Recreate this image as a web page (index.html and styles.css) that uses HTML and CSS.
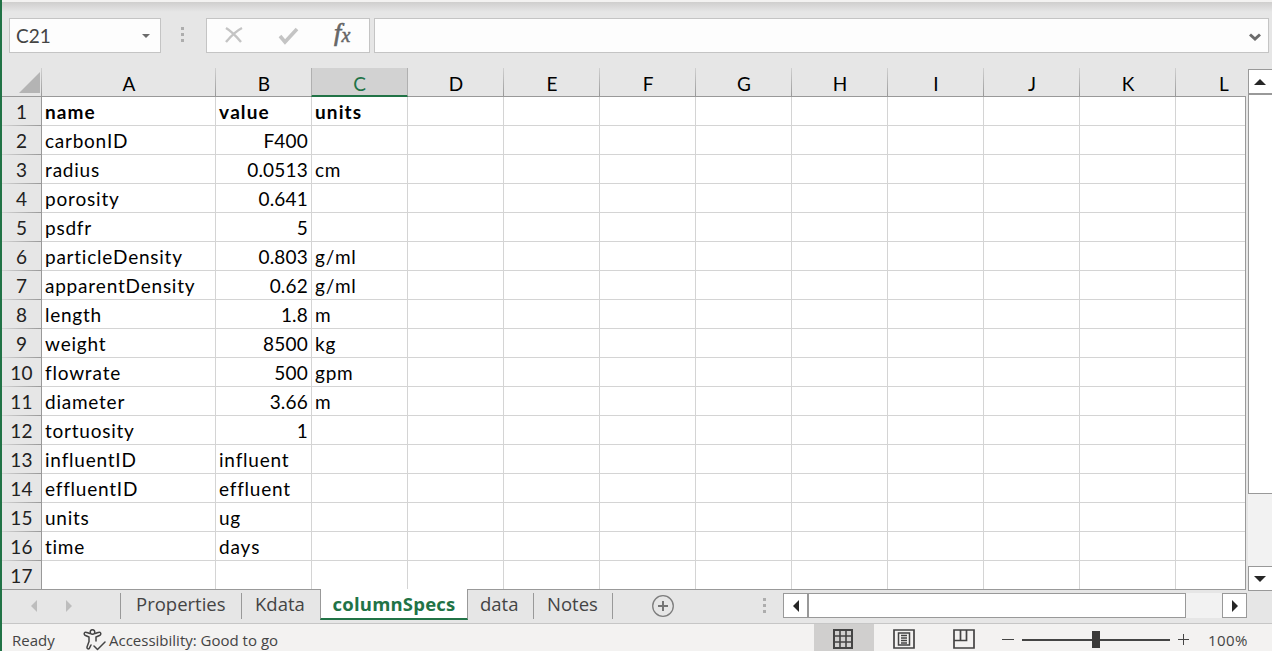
FILE: index.html
```html
<!DOCTYPE html>
<html lang="en">
<head>
<meta charset="utf-8">
<title>Workbook</title>
<link rel="stylesheet" href="styles.css">
</head>
<body>
<div class="window">
  <div class="ribbon-edge"></div>
  <div class="formula-bar">
    <div class="name-box"><span>C21</span>
      <svg width="8" height="4" viewBox="0 0 8 4"><path d="M0 0h8L4 4z" fill="#6b6b6b"/></svg>
    </div>
    <div class="dots"><i></i><i></i><i></i></div>
    <div class="fx-box">
      <svg width="162" height="33" viewBox="0 0 162 33">
        <path d="M19 9c5 3 10 8 15 14M35 9c-6 3-11 8-16 14" fill="none" stroke="#c4c4c4" stroke-width="2.400"/>
        <path d="M73 17l5 6L90 10" fill="none" stroke="#c4c4c4" stroke-width="3.600"/>
        <text x="127" y="22" class="fx-f">f</text><text x="134.500" y="23" class="fx-x">x</text>
      </svg>
    </div>
    <div class="formula-input">
      <svg width="12" height="9" viewBox="0 0 12 9"><path d="M1 1.500l5 4.500 5-4.500" fill="none" stroke="#6b6b6b" stroke-width="3"/></svg>
    </div>
  </div>
  <div class="work">
    <div class="sheet">
      <div class="col-heads">
        <div class="corner"><svg width="21" height="21" viewBox="0 0 21 21"><path d="M21 0v21H0z" fill="#b4b4b4"/></svg></div>
        <div>A</div><div>B</div><div class="selected">C</div><div>D</div><div>E</div><div>F</div><div>G</div><div>H</div><div>I</div><div>J</div><div>K</div><div class="last">L</div>
      </div>
      <div class="rows">
        <div class="row bold"><b>1</b><span>name</span><span>value</span><span>units</span></div>
        <div class="row"><b>2</b><span>carbonID</span><span class="num">F400</span><span></span></div>
        <div class="row"><b>3</b><span>radius</span><span class="num">0.0513</span><span>cm</span></div>
        <div class="row"><b>4</b><span>porosity</span><span class="num">0.641</span><span></span></div>
        <div class="row"><b>5</b><span>psdfr</span><span class="num">5</span><span></span></div>
        <div class="row"><b>6</b><span>particleDensity</span><span class="num">0.803</span><span>g/ml</span></div>
        <div class="row"><b>7</b><span>apparentDensity</span><span class="num">0.62</span><span>g/ml</span></div>
        <div class="row"><b>8</b><span>length</span><span class="num">1.8</span><span>m</span></div>
        <div class="row"><b>9</b><span>weight</span><span class="num">8500</span><span>kg</span></div>
        <div class="row"><b>10</b><span>flowrate</span><span class="num">500</span><span>gpm</span></div>
        <div class="row"><b>11</b><span>diameter</span><span class="num">3.66</span><span>m</span></div>
        <div class="row"><b>12</b><span>tortuosity</span><span class="num">1</span><span></span></div>
        <div class="row"><b>13</b><span>influentID</span><span>influent</span><span></span></div>
        <div class="row"><b>14</b><span>effluentID</span><span>effluent</span><span></span></div>
        <div class="row"><b>15</b><span>units</span><span>ug</span><span></span></div>
        <div class="row"><b>16</b><span>time</span><span>days</span><span></span></div>
        <div class="row"><b>17</b><span></span><span></span><span></span></div>
      </div>
    </div>
    <div class="vscroll">
      <div class="sbtn"><svg width="12" height="6" viewBox="0 0 12 6"><path d="M6 0l6 6H0z" fill="#262626"/></svg></div>
      <div class="vthumb"></div>
      <div class="vtrack"></div>
      <div class="sbtn"><svg width="12" height="6" viewBox="0 0 12 6"><path d="M0 0h12L6 6z" fill="#262626"/></svg></div>
    </div>
  </div>
  <div class="tabbar">
    <div class="tab-nav">
      <svg width="6" height="12" viewBox="0 0 6 12"><path d="M6 0v12L0 6z" fill="#bdbdbd"/></svg>
      <svg width="6" height="12" viewBox="0 0 6 12"><path d="M0 0v12l6-6z" fill="#bdbdbd"/></svg>
    </div>
    <div class="tab t1"><span>Properties</span></div>
    <div class="tab t2"><span>Kdata</span></div>
    <div class="tab active"><span>columnSpecs</span></div>
    <div class="tab t3"><span>data</span></div>
    <div class="tab t4"><span>Notes</span></div>
    <svg class="add" width="22" height="22" viewBox="0 0 22 22"><circle cx="11" cy="11" r="10.300" fill="none" stroke="#7d7d7d" stroke-width="1.300"/><path d="M11 6v10M6 11h10" stroke="#757575" stroke-width="2"/></svg>
    <div class="hdots"><i></i><i></i><i></i></div>
    <div class="hscroll">
      <div class="hbtn"><svg width="6" height="12" viewBox="0 0 6 12"><path d="M6 0v12L0 6z" fill="#262626"/></svg></div>
      <div class="hthumb"></div>
      <div class="htrack"></div>
      <div class="hbtn"><svg width="6" height="12" viewBox="0 0 6 12"><path d="M0 0v12l6-6z" fill="#262626"/></svg></div>
    </div>
  </div>
  <div class="status">
    <span class="ready">Ready</span>
    <svg class="acc" width="23" height="22" viewBox="0 0 23 22" fill="none" stroke="#444" stroke-width="1.500" stroke-linecap="round" stroke-linejoin="round">
      <circle cx="9.500" cy="3" r="2.300"/>
      <path d="M7 4.500C5 4.300 3.500 2.500 2 3.300.6 4.500 1.200 6 2.500 6.500L6 8v4.500L4 18c-.2 1.500 1 2.300 2.200 1.700L8 16M12 4.500c2-.2 3.500-2 5-1.200 1.400 1.200.8 2.700-.5 3.200L13 8v4M11 17l3.500 3.500L22 13"/>
    </svg>
    <span class="acc-text">Accessibility: Good to go</span>
    <div class="view on"><svg width="20" height="20" viewBox="0 0 20 20" fill="none" stroke="#444"><path d="M1 1h18v18H1z" stroke-width="2"/><path d="M7 1v18M13 1v18M1 7h18M1 13h18" stroke-width="1.600"/></svg></div>
    <div class="view"><svg width="22" height="20" viewBox="0 0 22 20" fill="none" stroke="#444"><path d="M1 1h20v18H1z" stroke-width="1.700"/><path d="M5.500 4h11v12h-11z" stroke-width="1.500"/><path d="M8 6.500h6M8 9h6M8 11.500h6M8 14h6" stroke-width="1.300"/></svg></div>
    <div class="view"><svg width="22" height="20" viewBox="0 0 22 20" fill="none" stroke="#444"><path d="M1 1h20v18H1z" stroke-width="1.700"/><path d="M7.500 1v10.500M1 11.500h12.500V1" stroke-width="1.700"/></svg></div>
    <svg class="zoom" width="188" height="17" viewBox="0 0 188 17"><path d="M0 8.500h12M176 8.500h11M181.500 3v11" stroke="#444" stroke-width="1"/><path d="M20 9h148" stroke="#444" stroke-width="2"/><path d="M90 0h8v17h-8z" fill="#3b3a39"/></svg>
    <span class="pct">100%</span>
  </div>
</div>
</body>
</html>
```
FILE: styles.css
```css
* { box-sizing: border-box; }
body { margin: 0; width: 1272px; height: 651px; overflow: hidden; }
.window { height: 651px; border-left: 2px solid #217346; background: #e6e6e6; display: flex; flex-direction: column; font-family: "Open Sans", sans-serif; }
.ribbon-edge { height: 18px; flex: none; background: linear-gradient(#f3f2f1 0 2px, #cfcecd 2px, #e6e6e6 12px); }
.formula-bar { display: flex; height: 50px; flex: none; padding-left: 7px; align-items: flex-start; }
.name-box, .fx-box, .formula-input { height: 35px; border: 1px solid #c4c4c4; background: #fdfdfd; }
.name-box { width: 152px; display: flex; align-items: center; justify-content: space-between; padding: 0 10px 0 6px; font: 19px "Lato", sans-serif; color: #444; }
.dots, .hdots { display: flex; flex-direction: column; gap: 3px; }
.dots i, .hdots i { width: 3px; height: 3px; background: #adadad; }
.dots { margin: 9px 22px 0 20px; }
.fx-box { width: 164px; }
.fx-box svg { display: block; }
.fx-f { font: italic 26px "Liberation Serif", serif; fill: #666; stroke: #666; stroke-width: .7px; }
.fx-x { font: italic 20px "Liberation Serif", serif; fill: #666; stroke: #666; stroke-width: .5px; }
.formula-input { width: 895px; margin-left: 4px; display: flex; justify-content: flex-end; align-items: center; padding: 3px 7px 0 0; }
.work { display: flex; height: 521px; flex: none; }
.sheet { width: 1244px; font: 19px/28px "Lato", sans-serif; color: #000; background: linear-gradient(#999, #999) right 28px / 1px 100% no-repeat #fff; }
.col-heads { display: flex; height: 29px; width: 1244px; background: #e6e6e6; border-bottom: 1px solid #999; text-align: center; line-height: 31px; }
.col-heads div { width: 96px; flex: none; background: linear-gradient(#d0d0d0, #999) right / 1px 100% no-repeat; }
.col-heads .corner { width: 40px; padding: 4px 0 0 15px; line-height: 0; }
.col-heads .corner + div { width: 174px; }
.col-heads .selected { width: 97px; margin-left: -1px; height: 29px; background: #d2d2d2; border: solid #b0b0b0; border-width: 0 1px; border-bottom: 2px solid #217346; color: #217346; }
.col-heads .last { width: 70px; padding-left: 26px; background: none; }
.rows { width: 1243px; background: repeating-linear-gradient(90deg, transparent 0 95px, #d4d4d4 95px 96px) 310px 0 / 933px 100% no-repeat; height: 492px; overflow: hidden; }
.row { height: 29px; display: grid; grid-template-columns: 40px 174px 96px 96px; border-bottom: 1px solid #d4d4d4; letter-spacing: .75px; }
.row > * { height: 28px; border-right: 1px solid #d4d4d4; padding: 1px 3px 0; white-space: nowrap; font-variant-ligatures: none; font-kerning: none; }
.row > b { height: 29px; font-weight: 400; text-align: center; background: linear-gradient(90deg, #d4d4d4, #999) bottom / 100% 1px no-repeat #e6e6e6; border-color: #999; padding: 1px 0 0; color: #222; letter-spacing: .2px; }
.row:last-child { border-bottom: 0; }
.bold span { font-weight: 700; letter-spacing: 1.1px; }
.row .num { text-align: right; letter-spacing: .2px; }
.vscroll { width: 24px; margin: 1px 0 0 2px; flex: none; display: flex; flex-direction: column; }
.sbtn { height: 25px; flex: none; border: 1px solid #999; border-right: 0; background: #fff; display: grid; place-items: center; padding-right: 1px; }
.vthumb { height: 400px; flex: none; border: 1px solid #999; border-right: 0; background: #fff; }
.vtrack { height: 72px; flex: none; background: #f2f2f2; }
.tabbar { height: 34px; flex: none; display: flex; background: linear-gradient(#999, #999) 0 0 / 1244px 1px no-repeat; color: #444; font-size: 18.500px; }
.tab-nav { width: 118px; display: flex; gap: 29px; padding: 11px 0 0 29px; }
.tab { height: 31px; padding-top: 3px; line-height: 23px; white-space: nowrap; background: linear-gradient(#999, #999) right 4px / 1px 26px no-repeat; }
.tab span { display: block; }
.t1 { width: 122px; padding-left: 16px; background: linear-gradient(#999, #999) right 4px / 1px 26px no-repeat, linear-gradient(#999, #999) left 4px / 1px 26px no-repeat; }
.t2 { width: 78px; padding-left: 13px; background: none; }
.active { width: 148px; background: #fff; border: solid #999; border-width: 0 1px; border-bottom: 2px solid #217346; color: #217346; font-weight: 700; text-align: center; letter-spacing: .2px; }
.t3 { width: 66px; padding-left: 12px; }
.t4 { width: 79px; padding-left: 13px; }
.add { margin: 6px 0 0 39px; flex: none; }
.hdots { margin: 9px 17px 0 89px; }
.hscroll { width: 464px; height: 25px; margin-top: 4px; display: flex; flex: none; }
.hbtn { width: 25px; border: 1px solid #999; background: #fff; display: grid; place-items: center; }
.hthumb { width: 378px; border: 1px solid #999; background: #fff; }
.htrack { width: 36px; background: #f2f2f2; }
.status { height: 28px; flex: none; display: flex; background: #f3f2f1; border-top: 1px solid #c6c6c6; color: #444; font-size: 15px; line-height: 33px; white-space: nowrap; }
.ready { width: 81px; padding-left: 10px; }
.acc { margin-top: 5px; flex: none; }
.acc-text { width: 708px; padding-left: 3px; }
.view { width: 60px; display: flex; justify-content: center; padding-top: 5px; flex: none; }
.view.on { background: #d0cfce; padding-right: 2px; }
.zoom { margin: 7px 0 0 8px; flex: none; }
.pct { margin-left: 18px; letter-spacing: .4px; }
```
